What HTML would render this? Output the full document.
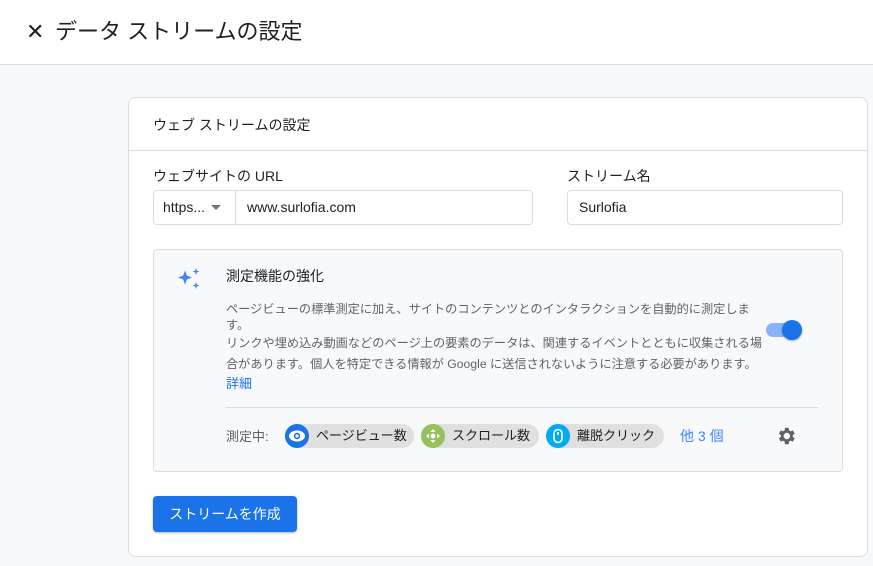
<!DOCTYPE html>
<html><head><meta charset="utf-8"><style>
*{box-sizing:border-box;margin:0;padding:0}
body{width:873px;height:566px;overflow:hidden;background:#f8f9fa;font-family:"Liberation Sans","Noto Sans CJK JP",sans-serif;color:#202124;position:relative}
.abs{position:absolute}
.hdr{left:0;top:0;width:873px;height:65px;background:#fff;border-bottom:1px solid #dadce0}
.card{left:128px;top:97px;width:740px;height:460px;background:#fff;border:1px solid #dadce0;border-radius:8px}
.inp{border:1px solid #dadce0;border-radius:4px;height:35px;background:#fff;font-size:14px;line-height:33px}
.enh{left:153px;top:249px;width:690px;height:223px;background:#f8f9fa;border:1px solid #dadce0;border-radius:4px}
.p{font-size:12.2px;color:#5f6368;line-height:16px;white-space:nowrap;left:226px}
.chip{top:424px;height:24px;border-radius:12px;background:#e0e0e0;font-size:13px;line-height:24px;color:#202124}
.chip i{position:absolute;left:0;top:0;width:24px;height:24px;border-radius:12px}
.chip span{position:absolute;left:31px}
</style></head><body>
<div class="abs hdr"></div>
<div class="abs" style="left:26px;top:18px;font-size:22px;line-height:28px;color:#202124">✕</div>
<div class="abs" style="left:55px;top:17px;font-size:22px;line-height:30px;color:#202124">データ ストリームの設定</div>
<div class="abs card"></div>
<div class="abs" style="left:153px;top:115px;font-size:14px;line-height:20px">ウェブ ストリームの設定</div>
<div class="abs" style="left:129px;top:150px;width:738px;height:1px;background:#dadce0"></div>
<div class="abs" style="left:153px;top:166px;font-size:14px;line-height:20px">ウェブサイトの URL</div>
<div class="abs" style="left:567px;top:166px;font-size:14px;line-height:20px">ストリーム名</div>
<div class="abs inp" style="left:153px;top:190px;width:380px"></div>
<div class="abs" style="left:235px;top:191px;width:1px;height:33px;background:#dadce0"></div>
<div class="abs" style="left:163px;top:191px;font-size:14px;line-height:33px">https...</div>
<div class="abs" style="left:211px;top:205px;width:0;height:0;border-left:5px solid transparent;border-right:5px solid transparent;border-top:5px solid #757575"></div>
<div class="abs" style="left:247px;top:191px;font-size:14px;line-height:33px">www.surlofia.com</div>
<div class="abs inp" style="left:567px;top:190px;width:276px;padding-left:11px">Surlofia</div>
<div class="abs enh"></div>
<svg class="abs" style="left:176px;top:266px" width="26" height="26" viewBox="0 0 26 26"><path fill="#4285f4" d="M9 4.5l1.9 5.1L16 11.5l-5.1 1.9L9 18.5l-1.9-5.1L2 11.5l5.1-1.9z M20 2l.9 2.6L23.5 5.5l-2.6.9L20 9l-.9-2.6L16.5 5.5l2.6-.9z M20 16l.9 2.6L23.5 19.5l-2.6.9L20 23l-.9-2.6L16.5 19.5l2.6-.9z"/></svg>
<div class="abs" style="left:226px;top:266px;font-size:14px;line-height:20px">測定機能の強化</div>
<div class="abs p" style="top:301px">ページビューの標準測定に加え、サイトのコンテンツとのインタラクションを自動的に測定しま</div>
<div class="abs p" style="top:317px">す。</div>
<div class="abs p" style="top:335px">リンクや埋め込み動画などのページ上の要素のデータは、関連するイベントとともに収集される場</div>
<div class="abs p" style="top:356px">合があります。個人を特定できる情報が Google に送信されないように注意する必要があります。</div>
<div class="abs" style="left:226px;top:374px;font-size:13px;line-height:19px;color:#1a73e8">詳細</div>
<div class="abs" style="left:766px;top:323px;width:34px;height:14px;border-radius:7px;background:#8ab4f8"></div>
<div class="abs" style="left:782px;top:320px;width:20px;height:20px;border-radius:10px;background:#1a73e8;box-shadow:0 1px 2px rgba(0,0,0,.3)"></div>
<div class="abs" style="left:226px;top:407px;width:592px;height:1px;background:#dadce0"></div>
<div class="abs" style="left:226px;top:427px;font-size:13px;line-height:19px;color:#5f6368">測定中:</div>
<div class="abs chip" style="left:285px;width:129px"><i style="background:#1a73e8"><svg width="24" height="24"><ellipse cx="12" cy="12" rx="8" ry="5.5" fill="#fff"/><circle cx="12" cy="12" r="3.2" fill="#1a73e8"/><circle cx="12" cy="12" r="1.6" fill="#fff"/></svg></i><span>ページビュー数</span></div>
<div class="abs chip" style="left:421px;width:118px"><i style="background:#97c15c"><svg width="24" height="24"><path d="M12 5l2.5 3h-5zM12 19l-2.5-3h5zM5 12l3-2.5v5zM19 12l-3 2.5v-5z" fill="#fff"/><circle cx="12" cy="12" r="2.5" fill="#fff"/></svg></i><span>スクロール数</span></div>
<div class="abs chip" style="left:546px;width:118px"><i style="background:#03a9f4"><svg width="24" height="24"><rect x="8" y="5.5" width="8" height="13" rx="4" fill="none" stroke="#fff" stroke-width="1.6"/><path d="M12 8v3" stroke="#fff" stroke-width="1.6"/></svg></i><span>離脱クリック</span></div>
<div class="abs" style="left:680px;top:426px;font-size:14px;line-height:20px;color:#4285f4">他 3 個</div>
<svg class="abs" style="left:775px;top:425px" width="22" height="22" viewBox="0 0 24 24"><path fill="#5f6368" d="M19.4 13a7.5 7.5 0 000-2l2.1-1.6-2-3.5-2.5 1a7.3 7.3 0 00-1.7-1L14.9 3h-4l-.4 2.9a7.3 7.3 0 00-1.7 1l-2.5-1-2 3.5L6.4 11a7.5 7.5 0 000 2l-2.1 1.6 2 3.5 2.5-1a7.3 7.3 0 001.7 1l.4 2.9h4l.4-2.9a7.3 7.3 0 001.7-1l2.5 1 2-3.5zM12.9 15.5a3.5 3.5 0 110-7 3.5 3.5 0 010 7z"/></svg>
<div class="abs" style="left:153px;top:496px;width:144px;height:36px;background:#1a73e8;border-radius:4px;color:#fff;font-size:14px;line-height:36px;text-align:center;box-shadow:0 1px 2px rgba(0,0,0,.3)">ストリームを作成</div>
</body></html>
